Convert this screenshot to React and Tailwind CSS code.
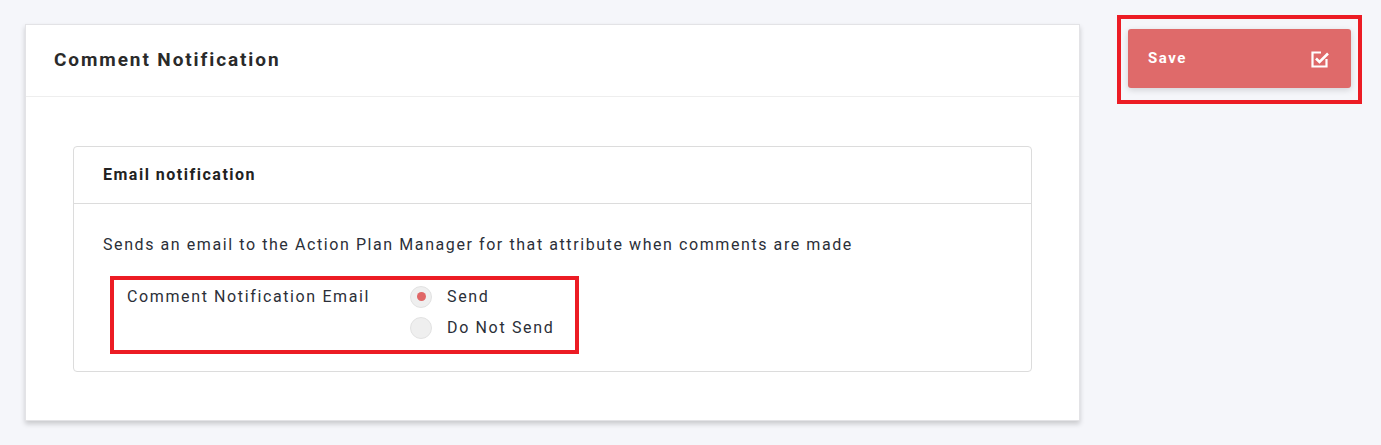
import { useState } from "react";

function SaveIcon() {
  return (
    <svg width="20" height="20" viewBox="0 0 20 20" fill="none">
      <path d="M11 3.5H2.5v14h14V10" stroke="white" strokeWidth="2.2" />
      <path d="M6 9.5l3.5 3.5L18 4.5" stroke="white" strokeWidth="2.6" />
    </svg>
  );
}

function Radio({ checked, label, onClick }) {
  return (
    <button type="button" onClick={onClick} className="flex items-center gap-[15px] h-[31px]">
      <span className="w-[22px] h-[22px] rounded-full bg-[#efefef] border border-[#e2e2e2] flex items-center justify-center">
        {checked && <span className="w-[9px] h-[9px] rounded-full bg-[#e06666]" />}
      </span>
      <span className="text-[16px] tracking-[1.65px] text-[#2b2f38]">{label}</span>
    </button>
  );
}

export default function App() {
  const [send, setSend] = useState(true);

  return (
    <div className="min-h-[445px] bg-[#f5f6fa] flex items-start gap-[37px] pl-[25px] pt-[24px] font-['Roboto',sans-serif]">
      {/* main card */}
      <div className="w-[1055px] bg-white border border-[#e3e3e6] shadow-[0_3px_5px_rgba(0,0,0,0.18)]">
        <div className="h-[72px] flex items-center px-[28px] border-b border-[#eeeeee]">
          <h2 className="text-[19px] font-bold tracking-[1.9px] text-[#2a2a2a]">Comment Notification</h2>
        </div>
        <div className="px-[47px] pt-[49px] pb-[48px]">
          <div className="border border-[#dcdcdc] rounded-[4px]">
            <div className="h-[57px] flex items-center px-[29px] border-b border-[#dcdcdc]">
              <h3 className="text-[16px] font-bold tracking-[1.5px] text-[#222]">Email notification</h3>
            </div>
            <div className="px-[29px] pt-[31px] pb-[17px]">
              <p className="text-[16px] tracking-[1.58px] text-[#2b2f38] leading-[20px]">
                Sends an email to the Action Plan Manager for that attribute when comments are made
              </p>
              <div className="mt-[21px] ml-[7px] w-[469px] border-[4px] border-[#ec1c24] flex pl-[13px] pt-[1px] pb-[7px]">
                <span className="w-[283px] text-[16px] tracking-[1.62px] text-[#2b2f38] leading-[31px]">
                  Comment Notification Email
                </span>
                <div className="flex flex-col">
                  <Radio checked={send} label="Send" onClick={() => setSend(true)} />
                  <Radio checked={!send} label="Do Not Send" onClick={() => setSend(false)} />
                </div>
              </div>
            </div>
          </div>
        </div>
      </div>

      {/* save */}
      <div className="-mt-[9px] border-[4px] border-[#ec1c24] px-[7px] pt-[10px] pb-[12px]">
        <button
          type="button"
          className="w-[223px] h-[59px] rounded-[3px] bg-[#df6a6a] shadow-[0_2px_6px_rgba(0,0,0,0.15)] flex items-center justify-between pl-[20px] pr-[21px]"
        >
          <span className="text-[15px] font-bold tracking-[1.5px] text-white">Save</span>
          <SaveIcon />
        </button>
      </div>
    </div>
  );
}
